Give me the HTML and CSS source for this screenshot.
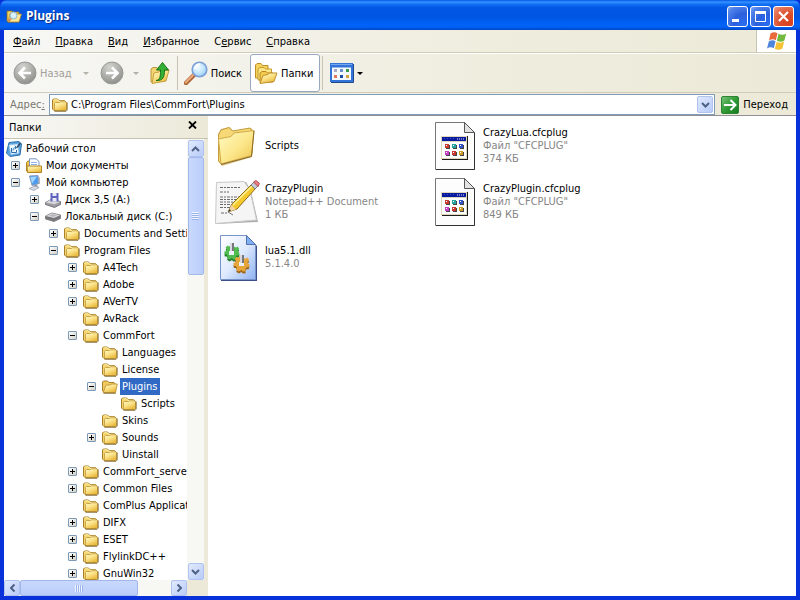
FILE: index.html
```html
<!DOCTYPE html>
<html lang="ru">
<head>
<meta charset="utf-8">
<title>Plugins</title>
<link rel="stylesheet" href="styles.css">
</head>
<body>
<svg class="defs" aria-hidden="true">
  <defs>
    <linearGradient id="g-fold" x1="0" y1="0" x2="0.6" y2="1"><stop offset="0" stop-color="#fffbc8"/><stop offset="0.5" stop-color="#fbe38a"/><stop offset="1" stop-color="#e9b93c"/></linearGradient>
    <linearGradient id="g-big" x1="0" y1="0" x2="1" y2="1"><stop offset="0" stop-color="#fffbc4"/><stop offset="0.55" stop-color="#fbe68a"/><stop offset="1" stop-color="#eec04c"/></linearGradient>
    <radialGradient id="g-grey" cx="0.4" cy="0.25" r="0.8"><stop offset="0" stop-color="#d4d4d0"/><stop offset="0.6" stop-color="#a9a9a6"/><stop offset="1" stop-color="#8b8b88"/></radialGradient>
    <linearGradient id="g-green" x1="0" y1="0" x2="1" y2="1"><stop offset="0" stop-color="#7cc47c"/><stop offset="0.5" stop-color="#2e9a35"/><stop offset="1" stop-color="#157a20"/></linearGradient>
    <linearGradient id="g-page" x1="0" y1="0" x2="1" y2="1"><stop offset="0" stop-color="#ffffff"/><stop offset="0.5" stop-color="#dfeafd"/><stop offset="1" stop-color="#8fb2f3"/></linearGradient>
    <radialGradient id="g-lens" cx="0.4" cy="0.35" r="0.7"><stop offset="0" stop-color="#f4fcff"/><stop offset="0.7" stop-color="#b5e0fb"/><stop offset="1" stop-color="#82bdf0"/></radialGradient>
    <symbol id="folder" viewBox="0 0 16 16">
      <path d="M.5 12V3L1.500 2H5.500L7 3.500H12.500L14 5V12.500L13 13.500H2Z" fill="#f5d36c" stroke="#a8802a"/>
      <path d="M1.500 3.500L2.300 2.800H5.300L6.700 4.300H12.500" stroke="#fff5b0" fill="none"/>
      <path d="M2.500 6.500L3.500 5.500H7.500L8.500 4.800H13.500L14.500 5.500V12.500L13.500 13.500H3.500L2.500 12.500Z" fill="url(#g-fold)" stroke="#c0963a" stroke-width=".8"/>
      <path d="M2.500 14.300H14L15.200 13V5.500" fill="none" stroke="#71591d" stroke-width=".8"/>
    </symbol>
    <symbol id="folder-open" viewBox="0 0 16 16">
      <path d="M.5 12V3L1.500 2H5.500L7 3.500H12L13 4.500V13H2Z" fill="#f0ca5e" stroke="#a8802a"/>
      <path d="M3.500 7L4.500 6H8.500L9.500 5H15.300L13.500 13.500H1.200Z" fill="url(#g-fold)" stroke="#b98c2e" stroke-width=".8"/>
      <path d="M1.500 14.300H13.800" stroke="#71591d" stroke-width=".8"/>
    </symbol>
    <symbol id="page-cfc" viewBox="0 0 40 48">
      <path d="M.5 .5H29.500L39.500 10.500V47.500H.5Z" fill="#fdfdfd" stroke="#777"/>
      <path d="M39.500 11V47.500H1" fill="none" stroke="#333"/>
      <path d="M29.500 .5V10.500H39.500Z" fill="#e2e2e2" stroke="#555"/>
      <rect x="7" y="14" width="26" height="24" fill="#1c1c1c"/>
      <rect x="6" y="14" width="26" height="23" fill="#e0d8bd"/>
      <rect x="7" y="15" width="24" height="4" fill="#0a1a9c"/>
      <path d="M9 16.500H19" stroke="#3a4cc4" stroke-dasharray="1 2"/>
      <path d="M22 17H30" stroke="#e8e8ff" stroke-dasharray="1 1"/>
      <rect x="7" y="20" width="24" height="16" fill="#fff"/>
      <g><path fill="#c93b2e" d="M10 22h4v4h-4z"/><path fill="#28a5a0" d="M17 22h4v4h-4z"/><path fill="#3554c9" d="M24 22h4v4h-4z"/><path fill="#c43fc1" d="M10 29h4v4h-4z"/><path fill="#c9352f" d="M17 29h4v4h-4z"/><path fill="#d29a27" d="M24 29h4v4h-4z"/></g>
      <path d="M11 23.500h1M18 23.500h1M25 23.500h1M11 30.500h1M18 30.500h1M25 30.500h1" stroke="#fff"/>
      <path d="M11 26.500h4M18 26.500h4M25 26.500h4M11 33.500h4M18 33.500h4M25 33.500h4M14.500 23v3M21.500 23v3M28.500 23v3M14.500 30v3M21.500 30v3M28.500 30v3" stroke="#444"/>
    </symbol>
    <symbol id="chev" viewBox="0 0 9 6"><path d="M1 1L4.500 4.500L8 1" fill="none" stroke="#4d6185" stroke-width="2"/></symbol>
    <symbol id="gear" viewBox="-10 -10 20 20">
      <path d="M-2-9H2L2.500-6.500L5-5.500L7-7L9-4L7.300-2.300L7.500 0L9.500 1L8.500 4.500L6 4.500L4.500 6.500L5 9L1.500 9.500L0 7.500L-3 9.500L-6 7.500L-5.500 5L-6.500 3L-9 3L-9.500-.5L-7-1.500L-6.500-3.500L-8-5.500L-5.500-8L-3.500-6.500Z"/>
    </symbol>
  </defs>
</svg>

<div class="window">
  <header class="titlebar">
    <svg class="ico" viewBox="0 0 16 16"><path d="M1 13V3h5l1 1h6v10H2z" fill="#f3cf62" stroke="#8f6b1c" stroke-width=".8"/><path d="M4 6H15.500L13 14H2Z" fill="#fbe795" stroke="#a5802a" stroke-width=".7"/><circle cx="7.500" cy="7.500" r="3.500" fill="#d8f0fc" stroke="#8fb4cc"/><path d="M5 10.500L2.500 13.500" stroke="#d8824c" stroke-width="1.800"/></svg>
    <h1>Plugins</h1>
    <div class="winbtns">
      <button class="wbtn" aria-label="Свернуть"><svg viewBox="0 0 19 19"><path d="M4 13.500H11" stroke="#fff" stroke-width="3"/></svg></button>
      <button class="wbtn" aria-label="Развернуть"><svg viewBox="0 0 19 19"><path d="M4.500 5V14.500H14.500V5" fill="none" stroke="#fff"/><path d="M4 5.500H15" stroke="#fff" stroke-width="3"/></svg></button>
      <button class="wbtn close" aria-label="Закрыть"><svg viewBox="0 0 19 19"><path d="M5 5L14 14M14 5L5 14" stroke="#fff" stroke-width="2.200"/></svg></button>
    </div>
  </header>

  <div class="frame">
    <div class="menubar">
      <nav class="menu">
        <a href="#"><u>Ф</u>айл</a><a href="#"><u>П</u>равка</a><a href="#"><u>В</u>ид</a><a href="#"><u>И</u>збранное</a><a href="#">С<u>е</u>рвис</a><a href="#"><u>С</u>правка</a>
      </nav>
      <div class="throbber">
        <svg width="20" height="20" viewBox="0 0 20 20">
          <path d="M3.500 2.500C6 .8 8.500 1 10.500 2.200L8.800 9.300C6.800 8 4.500 8 2 9.500Z" fill="#ea6a3c"/>
          <path d="M11.500 2.800C14 4 16.500 4 19.200 2.500L17.400 9.500C15 11 12.500 11 9.900 9.800Z" fill="#6fba3f"/>
          <path d="M1.800 10.500C4.300 9 6.500 9 8.500 10.300L6.800 17.300C4.800 16 2.500 16 0 17.500Z" fill="#4f86dc"/>
          <path d="M9.600 10.900C12 12 14.700 12 17.100 10.600L15.400 17.500C12.800 19 10.300 19 7.800 17.900Z" fill="#f6c233"/>
        </svg>
      </div>
    </div>

    <div class="toolbar">
      <button class="tool dim" disabled>
        <svg width="24" height="24" viewBox="0 0 24 24"><circle cx="12" cy="12" r="11" fill="url(#g-grey)" stroke="#999996"/><path d="M18 12H7M12 6.500L6.500 12L12 17.500" fill="none" stroke="#fff" stroke-width="2.600"/></svg>
        <span>Назад</span><i class="caret"></i>
      </button>
      <button class="tool dim fwd" disabled aria-label="Вперед">
        <svg width="24" height="24" viewBox="0 0 24 24"><circle cx="12" cy="12" r="11" fill="url(#g-grey)" stroke="#999996"/><path d="M6 12H17M12 6.500L17.500 12L12 17.500" fill="none" stroke="#fff" stroke-width="2.600"/></svg>
        <i class="caret"></i>
      </button>
      <button class="tool up" aria-label="Вверх">
        <svg width="24" height="24" viewBox="0 0 24 24"><path d="M3 21V8L5 6.500H9L11 8.500H17V20Z" fill="#f2d472" stroke="#bd963a"/><path d="M6 12L11 11L12 9.500L21 9L18 20L4 22.500Z" fill="url(#g-fold)" stroke="#c7a040"/><path d="M8 19.500C12 19 12.500 16 12.500 9H8.500L14.500 1.500L20.500 9H16.500C16.500 16 15 20 8 19.500Z" fill="#36b034" stroke="#15721a"/></svg>
      </button>
      <span class="sep"></span>
      <button class="tool search">
        <svg width="24" height="24" viewBox="0 0 24 24"><path d="M10 14L2 22" stroke="#a85f34" stroke-width="4.500" stroke-linecap="round"/><path d="M9.500 13.800L1.800 21.500" stroke="#eba978" stroke-width="2.200" stroke-linecap="round"/><circle cx="15.500" cy="8.500" r="7.300" fill="url(#g-lens)" stroke="#7fa0d6" stroke-width="1.600"/><path d="M11 8a4.500 4.500 0 0 1 5-4.500" stroke="#fff" stroke-width="1.800" fill="none"/></svg>
        <span>Поиск</span>
      </button>
      <button class="tool pressed" aria-pressed="true">
        <svg width="24" height="24" viewBox="0 0 24 24"><path d="M1.500 17V4L3 2.500H7L8.500 4.500H14V17Z" fill="#f4d25c" stroke="#bd8f25"/><path d="M4 19V8L6 6.500H10L11.500 8H17.500V19Z" fill="#fbe584" stroke="#c59b30"/><path d="M6 21.500V12L8 10.500H12L13.500 12H19V21Z" fill="#f2cb4f" stroke="#b98a24"/><path d="M9 14.500L14 13.500L15 12H23L20 20.500L6 22.500Z" fill="url(#g-fold)" stroke="#c0922c"/></svg>
        <span>Папки</span>
      </button>
      <span class="sep"></span>
      <button class="tool views" aria-label="Вид">
        <svg width="24" height="20" viewBox="0 0 24 20"><rect x="1" y="1" width="21" height="17" fill="#f4f8ff" stroke="#3374d8" stroke-width="2"/><path d="M0 2.500H23" stroke="#3374d8" stroke-width="4"/><path d="M1 1.500H22" stroke="#76a8ef"/><path d="M23.500 1V19.500H1" fill="none" stroke="#21498f"/><path fill="#a9aabb" d="M4 6h3v3H4z"/><path fill="#6b92cf" d="M10 6h3v3h-3z"/><path fill="#3d9a4a" d="M16 6h3v3h-3z"/><path fill="#e0795a" d="M4 12h3v3H4z"/><path fill="#1c4ba5" d="M10 12h3v3h-3z"/><path fill="#d3a43c" d="M16 12h3v3h-3z"/></svg>
        <i class="caret"></i>
      </button>
    </div>

    <form class="addressbar">
      <label for="addr">Адрес<u>:</u></label>
      <div class="combo">
        <svg class="ico"><use href="#folder"/></svg>
        <input id="addr" type="text" value="C:\Program Files\CommFort\Plugins">
        <button type="button" class="sbtn" aria-label="Список"><svg width="9" height="6"><use href="#chev"/></svg></button>
      </div>
      <button type="button" class="go">
        <svg width="18" height="18" viewBox="0 0 18 18"><rect x=".5" y=".5" width="17" height="17" rx="1.500" fill="url(#g-green)" stroke="#2c8433"/><path d="M3 9H14M9.500 4L14.500 9L9.500 14" fill="none" stroke="#fff" stroke-width="2"/></svg>
        <span>Переход</span>
      </button>
    </form>

    <main class="body">
      <aside class="side">
        <div class="sidehead"><h2>Папки</h2><button aria-label="Закрыть панель"><svg width="9" height="8" viewBox="0 0 9 8"><path d="M1 .5L8 7.500M8 .5L1 7.500" stroke="#000" stroke-width="1.800"/></svg></button></div>
        <div class="treearea">
          <div class="tree">
            <div class="row root"><svg class="ico" viewBox="0 0 16 16"><path d="M3 1.500L13 .5L15.500 3L14 14L4 15.500L.5 12Z" fill="#5ba3dc" stroke="#2a6dac"/><path d="M3 4L11.500 3L13 12L5 13.500Z" fill="#eef8ff" stroke="#9cc6e6" stroke-width=".6"/><path d="M5.500 7V11.500H10.500V9M7 9.500C7 7.500 8 6.500 10 6.500M8.800 4.800L10.700 6.500L9 8.200" fill="none" stroke="#2c6fae"/><path d="M14.500 2L11 6.500" stroke="#2f3f55" stroke-width="1.300"/></svg><span>Рабочий стол</span></div>
            <ul>
              <li><div class="row"><button class="tg plus" aria-label="Развернуть"></button><svg class="ico" viewBox="0 0 16 16"><path d="M.5 13V4.500L2 3H4.500V13Z" fill="#f0c34e" stroke="#b38522"/><path d="M3.500 .8H10L13 3.500V12H3.500Z" fill="#fff" stroke="#7795c5"/><path d="M5 4.500h6M5 6.500h6" stroke="#8cb1e6"/><path d="M1 8H15.500V14.500H1.500Z" fill="url(#g-fold)" stroke="#b38522"/></svg><span>Мои документы</span></div></li>
              <li><div class="row"><button class="tg" aria-label="Свернуть"></button><svg class="ico" viewBox="0 0 16 16"><path d="M3.500 1L12 .5L13 8.500L6 10.500Z" fill="#4e9cf0" stroke="#8a9bb6"/><path d="M4.500 2L11 1.500L6 8.500Z" fill="#a2d8ff"/><path d="M12.500 1L14 3V9L12.800 9.300" fill="#b9b9b9"/><path d="M8 10L11 9.500L12 12H8Z" fill="#8e99ae"/><path d="M3 13.500L9 11L13 12.500L8 15.500Z" fill="#d8dce4" stroke="#8f98a8" stroke-width=".7"/></svg><span>Мой компьютер</span></div>
                <ul>
                  <li><div class="row"><button class="tg plus" aria-label="Развернуть"></button><svg class="ico" viewBox="0 0 16 16"><path d="M.5 10.500L6 7.500L15.500 9.500V12.500L9.500 15.500L.5 12.500Z" fill="#9c9ca2" stroke="#65656b" stroke-width=".8"/><path d="M.8 10.500L6 7.500L15 9.700L9.500 12.300Z" fill="#d9d9dc"/><path d="M5.500 1H13.500V9.500H5.500Z" fill="#5d62bd"/><path d="M7.500 1h4v3h-4zM7.500 6h4v3.500h-4z" fill="#e9e9f5"/></svg><span>Диск 3,5 (A:)</span></div></li>
                  <li><div class="row"><button class="tg" aria-label="Свернуть"></button><svg class="ico" viewBox="0 0 16 16"><path d="M.5 7L7 4L15.500 6V9.500L9 12.500L.5 10Z" fill="#77777b" stroke="#77777c" stroke-width=".8"/><path d="M.8 7L7 4.200L15 6.300L9 9Z" fill="#d8d8da"/><path d="M4 6.800L8 5.300L12 6.500L8.500 7.800Z" fill="#b5b5ba"/></svg><span>Локальный диск (C:)</span></div>
                    <ul>
                      <li><div class="row"><button class="tg plus" aria-label="Развернуть"></button><svg class="ico"><use href="#folder"/></svg><span>Documents and Settings</span></div></li>
                      <li><div class="row"><button class="tg" aria-label="Свернуть"></button><svg class="ico"><use href="#folder"/></svg><span>Program Files</span></div>
                        <ul>
                          <li><div class="row"><button class="tg plus" aria-label="Развернуть"></button><svg class="ico"><use href="#folder"/></svg><span>A4Tech</span></div></li>
                          <li><div class="row"><button class="tg plus" aria-label="Развернуть"></button><svg class="ico"><use href="#folder"/></svg><span>Adobe</span></div></li>
                          <li><div class="row"><button class="tg plus" aria-label="Развернуть"></button><svg class="ico"><use href="#folder"/></svg><span>AVerTV</span></div></li>
                          <li><div class="row leaf"><svg class="ico"><use href="#folder"/></svg><span>AvRack</span></div></li>
                          <li><div class="row"><button class="tg" aria-label="Свернуть"></button><svg class="ico"><use href="#folder"/></svg><span>CommFort</span></div>
                            <ul>
                              <li><div class="row leaf"><svg class="ico"><use href="#folder"/></svg><span>Languages</span></div></li>
                              <li><div class="row leaf"><svg class="ico"><use href="#folder"/></svg><span>License</span></div></li>
                              <li><div class="row"><button class="tg" aria-label="Свернуть"></button><svg class="ico"><use href="#folder-open"/></svg><span class="sel">Plugins</span></div>
                                <ul><li><div class="row leaf"><svg class="ico"><use href="#folder"/></svg><span>Scripts</span></div></li></ul>
                              </li>
                              <li><div class="row leaf"><svg class="ico"><use href="#folder"/></svg><span>Skins</span></div></li>
                              <li><div class="row"><button class="tg plus" aria-label="Развернуть"></button><svg class="ico"><use href="#folder"/></svg><span>Sounds</span></div></li>
                              <li><div class="row leaf"><svg class="ico"><use href="#folder"/></svg><span>Uinstall</span></div></li>
                            </ul>
                          </li>
                          <li><div class="row"><button class="tg plus" aria-label="Развернуть"></button><svg class="ico"><use href="#folder"/></svg><span>CommFort_server</span></div></li>
                          <li><div class="row"><button class="tg plus" aria-label="Развернуть"></button><svg class="ico"><use href="#folder"/></svg><span>Common Files</span></div></li>
                          <li><div class="row leaf"><svg class="ico"><use href="#folder"/></svg><span>ComPlus Applications</span></div></li>
                          <li><div class="row"><button class="tg plus" aria-label="Развернуть"></button><svg class="ico"><use href="#folder"/></svg><span>DIFX</span></div></li>
                          <li><div class="row"><button class="tg plus" aria-label="Развернуть"></button><svg class="ico"><use href="#folder"/></svg><span>ESET</span></div></li>
                          <li><div class="row"><button class="tg plus" aria-label="Развернуть"></button><svg class="ico"><use href="#folder"/></svg><span>FlylinkDC++</span></div></li>
                          <li><div class="row"><button class="tg plus" aria-label="Развернуть"></button><svg class="ico"><use href="#folder"/></svg><span>GnuWin32</span></div></li>
                        </ul>
                      </li>
                    </ul>
                  </li>
                </ul>
              </li>
            </ul>
          </div>
          <div class="vbar">
            <button class="sbtn" aria-label="Вверх"><svg class="r180" width="9" height="6"><use href="#chev"/></svg></button>
            <div class="track"><div class="thumb"><i></i></div></div>
            <button class="sbtn" aria-label="Вниз"><svg width="9" height="6"><use href="#chev"/></svg></button>
          </div>
          <div class="hbar">
            <button class="sbtn" aria-label="Влево"><svg class="r90" width="9" height="6"><use href="#chev"/></svg></button>
            <div class="track"><div class="thumb"><i></i></div></div>
            <button class="sbtn" aria-label="Вправо"><svg class="r270" width="9" height="6"><use href="#chev"/></svg></button>
          </div>
        </div>
      </aside>

      <section class="files">
        <article class="file">
          <svg width="48" height="48" viewBox="0 0 48 48"><path d="M6 40L5 12L8 7L17 5L20 9L38 6L41 9L39 35L9 44Z" fill="#b98d2d" opacity=".55"/><path d="M5.500 39V13L8 8L16 5.500L19.500 9L37 6L39 9V31L8 42Z" fill="#f6d976" stroke="#c49c3c"/><path d="M5.500 17L18 14.500L21 11L41 8.500L38.500 33.500L8 42Z" fill="url(#g-big)" stroke="#d1aa48"/><path d="M8 42.500L38.500 34.500L41 9" fill="none" stroke="#8d6c25"/></svg>
          <div><p>Scripts</p></div>
        </article>
        <article class="file">
          <svg width="40" height="48" viewBox="0 0 40 48"><use href="#page-cfc"/></svg>
          <div><p>CrazyLua.cfcplug</p><small>Файл "CFCPLUG"</small><small>374 КБ</small></div>
        </article>
        <article class="file">
          <svg width="48" height="48" viewBox="0 0 48 48"><path d="M4 5L33 4L38 13L45 44L3 46Z" fill="#ababab"/><path d="M3.500 4.500L31 3.500L37 12L43.500 42L2.500 45.500Z" fill="#f5f5f5" stroke="#c9c9c9"/><path d="M7 9.500H27M7 14H16M7 19H28M7 21.500H25M7 24H27M7 26.500H23M7 29.500H20M8 35H14" stroke="#6b6b6b" stroke-dasharray="3 1 2 1"/><path d="M15 34L19 26L39 6L43 10L24 31Z" fill="#f5c92c" stroke="#8f6b12"/><path d="M20 27L39 8" stroke="#fff19b" stroke-width="1.500"/><path d="M15 34L18.500 27L23 31.500Z" fill="#f0d5aa"/><path d="M15 34L16.500 31L18 32.500Z" fill="#333"/><path d="M38 7L41 4L45 8L42 11Z" fill="#c8ccd6" stroke="#7c808a"/><path d="M40.500 4L43 2.500L46.500 5.500L45 8.500Z" fill="#e78284" stroke="#b64e50"/><path d="M15 34L20 37" stroke="#777"/></svg>
          <div><p>CrazyPlugin</p><small>Notepad++ Document</small><small>1 КБ</small></div>
        </article>
        <article class="file">
          <svg width="40" height="48" viewBox="0 0 40 48"><use href="#page-cfc"/></svg>
          <div><p>CrazyPlugin.cfcplug</p><small>Файл "CFCPLUG"</small><small>849 КБ</small></div>
        </article>
        <article class="file">
          <svg width="48" height="48" viewBox="0 0 48 48"><path d="M8 3H35L44 12V47H8Z" fill="#3a4f86"/><path d="M7.500 1.500H33.500L42.500 10.500V45.500H7.500Z" fill="url(#g-page)" stroke="#7793c9"/><path d="M33.500 1.500V10.500H42.500Z" fill="#7fb0f2" stroke="#5270ad"/><use href="#gear" x="9" y="12" width="20" height="16" fill="#237d2c"/><use href="#gear" x="9" y="10" width="20" height="16" fill="#4fbc4d"/><path d="M16 17h5v4h-5z" fill="#e9f1fb"/><use href="#gear" x="18" y="23" width="21" height="17" fill="#9b661d"/><use href="#gear" x="18" y="21" width="21" height="17" fill="#e6a53a"/><path d="M26 28h5v4h-5z" fill="#e9f1fb"/><path d="M19 9V17M29 21V29" stroke="#77777c" stroke-width="4"/><path d="M18 9V17M28 21V29" stroke="#d8d8de" stroke-width="2"/></svg>
          <div><p>lua5.1.dll</p><small>5.1.4.0</small></div>
        </article>
      </section>
    </main>
  </div>
</div>
</body>
</html>
```
FILE: styles.css
```css
* { box-sizing: border-box; }
html, body { height: 100%; margin: 0; }
body {
  background: #fff;
  color: #000;
  font: 11px/13px "DejaVu Sans Condensed", "DejaVu Sans", sans-serif;
  overflow: hidden;
}
h1, h2, p, ul { margin: 0; padding: 0; font-size: inherit; font-weight: normal; }
ul { list-style: none; }
button { font: inherit; color: inherit; border: 0; background: none; padding: 0; margin: 0; }
svg { display: block; flex: none; }
.defs { position: absolute; width: 0; height: 0; }
.ico { width: 16px; height: 16px; }

.window { height: 100%; display: flex; flex-direction: column; background: #0831d9; }

.titlebar {
  flex: none;
  height: 30px;
  padding: 2px 6px 0;
  display: flex;
  align-items: center;
  gap: 4px;
  border-radius: 7px 7px 0 0;
  background: linear-gradient(#0058e6 0, #3a93ff 7%, #1273f5 13%, #0257e3 26%, #0055e2 56%, #0062f8 80%, #0061f5 90%, #0045c4 100%);
}
.titlebar h1 {
  flex: 1;
  font: bold 12px/16px "Open Sans", "Noto Sans", sans-serif;
  color: #fff;
  text-shadow: 1px 1px 1px #0a2a80;
}
.winbtns { display: flex; gap: 2px; }
.wbtn {
  width: 21px;
  height: 21px;
  border: 1px solid #fff;
  border-radius: 3px;
  background: radial-gradient(circle at 85% 90%, #2a6cf0, #2c60dc 45%, #4f82ea 80%, #7ea6f5);
}
.wbtn.close { background: radial-gradient(circle at 85% 90%, #d8401c, #da4f2c 45%, #e6765a 80%, #f0a592); }

.frame {
  flex: 1;
  min-height: 0;
  display: flex;
  flex-direction: column;
  border: solid #0831d9;
  border-width: 0 4px 4px;
}

.menubar, .toolbar, .addressbar {
  flex: none;
  display: flex;
  background: linear-gradient(90deg, #f7f7f5, #efedde 60%, #ece9d8);
}
.menubar { height: 23px; border-bottom: 1px solid #d0ccba; }
.menu { flex: 1; display: flex; align-items: center; gap: 15px; padding-left: 9px; }
.menu a { color: #000; text-decoration: none; }
.throbber {
  width: 40px;
  background: #fff;
  border-left: 1px solid #c9c5b4;
  display: flex;
  align-items: center;
  justify-content: center;
}

.toolbar { height: 40px; align-items: center; padding-left: 9px; border-bottom: 1px solid #d0ccba; border-top: 1px solid #fff; }
.tool { display: flex; align-items: center; gap: 3px; height: 38px; }
.dim { color: #a09f98; }
.fwd { margin-left: 11px; }
.up { margin-left: 9px; }
.caret {
  margin-left: 8px;
  border: solid transparent;
  border-width: 3px 3px 0;
  border-top-color: #000;
}
.dim .caret { border-top-color: #b4b2a8; }
.fwd .caret { margin-left: 6px; }
.sep { width: 1px; height: 34px; background: #c8c4b2; margin-left: 5px; }
.search { margin-left: 6px; }
.pressed {
  margin-left: 8px;
  padding: 0 6px 0 3px;
  background: #fff;
  border: 1px solid #98a8c0;
  border-radius: 3px;
}
.pressed + .sep { margin-left: 2px; }
.views { margin-left: 7px; }
.views .caret { margin-left: 0; }

.addressbar { height: 23px; padding: 1px 8px 0 6px; align-items: center; gap: 6px; border-bottom: 1px solid #8f8f94; }
.addressbar label { color: #7a7970; width: 33px; white-space: nowrap; }
.combo {
  flex: 1;
  height: 21px;
  display: flex;
  align-items: center;
  gap: 3px;
  padding: 0 1px 0 2px;
  background: #fff;
  border: 1px solid #7f9db9;
}
.combo input { flex: 1; min-width: 0; border: 0; outline: 0; padding: 0; font: inherit; background: none; }
.go { display: flex; align-items: center; gap: 4px; }

.sbtn {
  flex: none;
  width: 16px;
  height: 17px;
  display: flex;
  align-items: center;
  justify-content: center;
  background: linear-gradient(135deg, #e1eafe, #b8cbf8);
  border: 1px solid #b0c3ef;
  border-radius: 2px;
}
.r180 { transform: rotate(180deg); }
.r90 { transform: rotate(90deg); }
.r270 { transform: rotate(270deg); }

.body { flex: 1; min-height: 0; display: flex; background: #fff; }
.side { flex: none; width: 204px; display: flex; flex-direction: column; background: #ece9d8; }
.sidehead {
  flex: none;
  height: 23px;
  padding: 0 11px 0 5px;
  display: flex;
  align-items: center;
  justify-content: space-between;
  background: linear-gradient(90deg, #f7f7f5, #ece9d8);
  border-bottom: 1px solid #c5c2b2;
}
.sidehead button { align-self: flex-start; padding-top: 5px; }
.treearea {
  flex: 1;
  min-height: 0;
  display: grid;
  grid-template-columns: minmax(0, 1fr) 17px;
  grid-template-rows: minmax(0, 1fr) 16px;
  padding-right: 4px;
}
.tree { overflow: hidden; background: #fff; white-space: nowrap; padding-top: 1px; }
.tree > ul { padding-left: 7px; }
.tree ul ul { padding-left: 19px; }
.row { display: flex; align-items: center; height: 17px; }
.row .ico { margin-right: 2px; }
.row span { padding: 2px; height: 17px; }
.row.root { padding-left: 2px; }
.row.leaf { padding-left: 15px; }
.row .sel { background: #316ac5; color: #fff; padding-right: 3px; }
.tg {
  flex: none;
  width: 9px;
  height: 9px;
  margin-right: 6px;
  border: 1px solid #7b9ab8;
  border-radius: 1px;
  background:
    linear-gradient(#000, #000) center / 5px 1px no-repeat,
    linear-gradient(135deg, #fff, #d3cfc3);
}
.tg.plus {
  background:
    linear-gradient(#000, #000) center / 5px 1px no-repeat,
    linear-gradient(#000, #000) center / 1px 5px no-repeat,
    linear-gradient(135deg, #fff, #d3cfc3);
}

.vbar, .hbar { display: flex; background: #f7f7f3; }
.vbar { flex-direction: column; align-items: center; padding-top: 1px; }
.hbar .sbtn { height: 16px; }
.track { flex: 1; display: flex; min-width: 0; min-height: 0; }
.vbar .track { flex-direction: column; }
.thumb {
  display: flex;
  align-items: center;
  justify-content: center;
  border: 1px solid #a3b8ea;
  border-radius: 2px;
  background: linear-gradient(90deg, #c9d8fd, #bacdfa);
}
.vbar .thumb { width: 16px; height: 29%; }
.hbar .thumb { width: 78%; background: linear-gradient(#c9d8fd, #bacdfa); }
.vbar i { width: 7px; height: 8px; background: repeating-linear-gradient(#eef4fe 0 1px, #9db3ec 1px 2px); }
.hbar i { width: 8px; height: 7px; background: repeating-linear-gradient(90deg, #eef4fe 0 1px, #9db3ec 1px 2px); }

.files {
  flex: 1;
  display: grid;
  grid-template-columns: repeat(2, 218px);
  grid-auto-rows: 56px;
  align-content: start;
  padding: 2px 0 0 5px;
}
.file { display: grid; grid-template-columns: 48px 1fr; column-gap: 4px; align-items: center; justify-items: start; }
.file > svg { justify-self: center; }
.file > div { padding-bottom: 2px; }
.file small { display: block; font-size: inherit; color: #868686; }
```
